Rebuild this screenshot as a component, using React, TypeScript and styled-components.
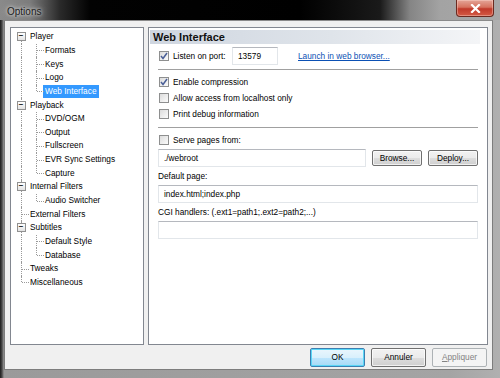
import * as React from "react";
import styled, { createGlobalStyle, css } from "styled-components";

const GlobalStyle = createGlobalStyle`
  html, body {
    margin: 0;
    padding: 0;
    background: #000;
  }
  body {
    font-family: "Liberation Sans", Arial, sans-serif;
    font-size: 8.3px;
    color: #000;
  }
`;

type Vert = "none" | "full" | "top" | "bottom";

type TreeItem = {
  label: string;
  cells: { vert: Vert; horiz?: boolean; box?: boolean }[];
  selected?: boolean;
};

const tree: TreeItem[] = [
  { label: "Player", cells: [{ vert: "bottom", box: true }] },
  { label: "Formats", cells: [{ vert: "full" }, { vert: "full", horiz: true }] },
  { label: "Keys", cells: [{ vert: "full" }, { vert: "full", horiz: true }] },
  { label: "Logo", cells: [{ vert: "full" }, { vert: "full", horiz: true }] },
  { label: "Web Interface", cells: [{ vert: "full" }, { vert: "top", horiz: true }], selected: true },
  { label: "Playback", cells: [{ vert: "full", box: true }] },
  { label: "DVD/OGM", cells: [{ vert: "full" }, { vert: "full", horiz: true }] },
  { label: "Output", cells: [{ vert: "full" }, { vert: "full", horiz: true }] },
  { label: "Fullscreen", cells: [{ vert: "full" }, { vert: "full", horiz: true }] },
  { label: "EVR Sync Settings", cells: [{ vert: "full" }, { vert: "full", horiz: true }] },
  { label: "Capture", cells: [{ vert: "full" }, { vert: "top", horiz: true }] },
  { label: "Internal Filters", cells: [{ vert: "full", box: true }] },
  { label: "Audio Switcher", cells: [{ vert: "full" }, { vert: "top", horiz: true }] },
  { label: "External Filters", cells: [{ vert: "full", horiz: true }] },
  { label: "Subtitles", cells: [{ vert: "full", box: true }] },
  { label: "Default Style", cells: [{ vert: "full" }, { vert: "full", horiz: true }] },
  { label: "Database", cells: [{ vert: "full" }, { vert: "top", horiz: true }] },
  { label: "Tweaks", cells: [{ vert: "full", horiz: true }] },
  { label: "Miscellaneous", cells: [{ vert: "top", horiz: true }] },
];

export default function App() {
  return (
    <>
      <GlobalStyle />
      <Window>
        <TitleBar>
          <Title>Options</Title>
          <CloseButton>
            <svg width="11" height="9" viewBox="0 0 11 9">
              <path d="M2 1 L9 8 M9 1 L2 8" stroke="#fff" strokeWidth="2.2" strokeLinecap="square" />
            </svg>
          </CloseButton>
        </TitleBar>
        <Frame>
          <Client>
            <Main>
              <TreeBox>
                {tree.map((item) => (
                  <TreeRow key={item.label}>
                    {item.cells.map((c, i) => (
                      <Cell key={i} $vert={c.vert} $horiz={!!c.horiz}>
                        {c.box && <Expander>−</Expander>}
                      </Cell>
                    ))}
                    <TreeLabel $selected={!!item.selected}>{item.label}</TreeLabel>
                  </TreeRow>
                ))}
              </TreeBox>
              <Panel>
                <Header>Web Interface</Header>
                <Section>
                  <Row>
                    <Check>
                      <CheckMark />
                    </Check>
                    <Label $width={59}>Listen on port:</Label>
                    <TextBox $width={46}>13579</TextBox>
                    <Link>Launch in web browser...</Link>
                  </Row>
                  <Separator />
                  <Row>
                    <Check>
                      <CheckMark />
                    </Check>
                    <Label>Enable compression</Label>
                  </Row>
                  <Row>
                    <Check />
                    <Label>Allow access from localhost only</Label>
                  </Row>
                  <Row>
                    <Check />
                    <Label>Print debug information</Label>
                  </Row>
                  <Separator />
                  <Row>
                    <Check />
                    <Label>Serve pages from:</Label>
                  </Row>
                  <FieldRow>
                    <TextBox $grow>./webroot</TextBox>
                    <PushButton>Browse...</PushButton>
                    <PushButton>Deploy...</PushButton>
                  </FieldRow>
                  <Caption>Default page:</Caption>
                  <TextBox>index.html;index.php</TextBox>
                  <Caption>CGI handlers: (.ext1=path1;.ext2=path2;...)</Caption>
                  <TextBox />
                </Section>
              </Panel>
            </Main>
            <Footer>
              <DialogButton $variant="default">OK</DialogButton>
              <DialogButton>Annuler</DialogButton>
              <DialogButton $variant="disabled">
                <u>A</u>ppliquer
              </DialogButton>
            </Footer>
          </Client>
        </Frame>
      </Window>
    </>
  );
}

function CheckMark() {
  return (
    <svg width="8" height="8" viewBox="0 0 8 8">
      <path d="M1 4 L3 6.5 L7 1" fill="none" stroke="#4a5f97" strokeWidth="1.5" />
    </svg>
  );
}

const Window = styled.div`
  width: 500px;
  height: 378px;
  display: flex;
  flex-direction: column;
  background: linear-gradient(to right, #1c1c1c 0px, #4a4a4a 2px, #9a9a9a 4px, #a4a4a4 90%, #b0b0b0 100%);
  overflow: hidden;
`;

const TitleBar = styled.div`
  height: 20px;
  flex: none;
  display: flex;
  align-items: flex-start;
  justify-content: space-between;
  padding: 0 6px 0 7px;
  background: linear-gradient(
    to right,
    #8a8a8a 0px,
    #7c7c7c 30px,
    #2a2a2a 60px,
    #020202 90px,
    #000 300px,
    #1a1a1a 380px,
    #858585 410px,
    #a3a3a3 440px,
    #a8a8a8 500px
  );
`;

const Title = styled.div`
  font-size: 10px;
  line-height: 20px;
  padding-top: 2px;
  color: #1b1b1b;
  text-shadow: 0 0 6px #d8d8d8, 0 0 3px #e0e0e0;
`;

const CloseButton = styled.div`
  width: 36px;
  height: 16px;
  display: flex;
  align-items: center;
  justify-content: center;
  border: 1px solid #6b2a20;
  border-top: none;
  border-radius: 0 0 4px 4px;
  background: linear-gradient(to bottom, #e4a598 0%, #d6725f 45%, #c0392a 55%, #d45b45 100%);
  box-shadow: inset 0 0 0 1px rgba(255, 220, 210, 0.4);
`;

const Frame = styled.div`
  flex: 1;
  display: flex;
  padding: 0 7px 8px 4px;
`;

const Client = styled.div`
  flex: 1;
  display: flex;
  flex-direction: column;
  background: #f0f0f0;
  border: 1px solid #7d7d7d;
  border-top-color: #8a8a8a;
  padding: 6px 4px 0 5px;
`;

const Main = styled.div`
  display: flex;
  gap: 4px;
  height: 318px;
`;

const TreeBox = styled.div`
  box-sizing: border-box;
  width: 134px;
  flex: none;
  background: #fff;
  border: 1px solid #828790;
  padding-top: 2px;
  padding-left: 3px;
`;

const TreeRow = styled.div`
  display: flex;
  align-items: center;
  height: 13.65px;
`;

const Cell = styled.div<{ $vert: Vert; $horiz: boolean }>`
  position: relative;
  width: 15px;
  height: 100%;
  flex: none;
  display: flex;
  align-items: center;
  justify-content: center;

  &::before {
    content: "";
    position: absolute;
    left: 7px;
    border-left: 1px dotted #9a9a9a;
    ${(p) =>
      p.$vert === "full"
        ? css`top: 0; bottom: 0;`
        : p.$vert === "top"
        ? css`top: 0; height: 50%;`
        : p.$vert === "bottom"
        ? css`top: 50%; bottom: 0;`
        : css`display: none;`}
  }

  &::after {
    content: "";
    position: absolute;
    left: 8px;
    right: 0;
    top: 50%;
    border-top: 1px dotted #9a9a9a;
    display: ${(p) => (p.$horiz ? "block" : "none")};
  }
`;

const Expander = styled.span`
  position: relative;
  z-index: 1;
  width: 7px;
  height: 7px;
  margin-left: -1px;
  border: 1px solid #919191;
  background: linear-gradient(to bottom, #ffffff, #e2e2e2);
  font-size: 8px;
  line-height: 6px;
  text-align: center;
  color: #222;
  font-weight: bold;
`;

const TreeLabel = styled.span<{ $selected: boolean }>`
  padding: 0 2px;
  line-height: 13px;
  margin-left: -1px;
  white-space: nowrap;
  ${(p) =>
    p.$selected &&
    css`
      background: #3399ff;
      color: #fff;
    `}
`;

const Panel = styled.div`
  flex: 1;
  background: #fff;
  border: 1px solid #828790;
  padding: 2px 9px 0 1px;
`;

const Header = styled.div`
  height: 14px;
  line-height: 14px;
  padding-left: 3px;
  margin-right: -2px;
  font-size: 11px;
  font-weight: bold;
  color: #111;
  background: linear-gradient(to right, #cfd6e0 0%, #dfe4ea 55%, #f4f5f7 100%);
`;

const Section = styled.div`
  display: flex;
  flex-direction: column;
  padding: 4px 0 0 8px;
`;

const Row = styled.div`
  display: flex;
  align-items: center;
  height: 16px;
`;

const Check = styled.span`
  width: 8px;
  height: 8px;
  flex: none;
  display: flex;
  align-items: center;
  justify-content: center;
  border: 1px solid #8e8f8f;
  background: linear-gradient(135deg, #dcdcdc, #fbfbfb);
  margin: 0 4px 0 1px;
`;

const Label = styled.span<{ $width?: number }>`
  white-space: nowrap;
  ${(p) => p.$width && css`width: ${p.$width}px;`}
`;

const TextBox = styled.div<{ $width?: number; $grow?: boolean }>`
  height: 16px;
  flex: none;
  line-height: 16px;
  padding: 0 5px;
  background: #fff;
  border: 1px solid #e2e6ea;
  border-top-color: #b5b8be;
  box-sizing: content-box;
  white-space: nowrap;
  ${(p) => p.$width && css`width: ${p.$width - 12}px;`}
  ${(p) => p.$grow && css`flex: 1 1 auto;`}
`;

const Link = styled.span`
  color: #0b50b4;
  text-decoration: underline;
  margin-left: 20px;
`;

const Separator = styled.div`
  height: 1px;
  background: #a0a0a0;
  margin: 5px 0 4px 0;
`;

const FieldRow = styled.div`
  display: flex;
  align-items: center;
  gap: 5px;
  margin-top: 1px;

  & > div + div {
    margin-left: 1px;
  }
`;

const PushButton = styled.div`
  width: 48px;
  height: 14px;
  line-height: 14px;
  text-align: center;
  border: 1px solid #707070;
  border-radius: 2px;
  background: linear-gradient(to bottom, #f2f2f2 0%, #ebebeb 50%, #dddddd 51%, #cfcfcf 100%);
  box-shadow: inset 0 0 0 1px rgba(255, 255, 255, 0.7);
`;

const Caption = styled.div`
  height: 18px;
  line-height: 19px;
`;

const Footer = styled.div`
  display: flex;
  justify-content: flex-end;
  gap: 6px;
  padding: 3px 1px 0 0;
`;

const DialogButton = styled.div<{ $variant?: "default" | "disabled" }>`
  width: 53px;
  height: 17px;
  line-height: 17px;
  text-align: center;
  border-radius: 2px;
  border: 1px solid #707070;
  background: linear-gradient(to bottom, #f2f2f2 0%, #ebebeb 50%, #dddddd 51%, #cfcfcf 100%);
  box-shadow: inset 0 0 0 1px rgba(255, 255, 255, 0.7);
  ${(p) =>
    p.$variant === "default" &&
    css`
      border-color: #3c7fb1;
      background: linear-gradient(to bottom, #eaf6fd 0%, #d9f0fc 50%, #bee6fd 51%, #a7d9f5 100%);
      box-shadow: inset 0 0 0 1px #5ad7f7;
    `}
  ${(p) =>
    p.$variant === "disabled" &&
    css`
      border-color: #adb2b5;
      background: #f4f4f4;
      color: #838383;
      box-shadow: none;
    `}
`;
